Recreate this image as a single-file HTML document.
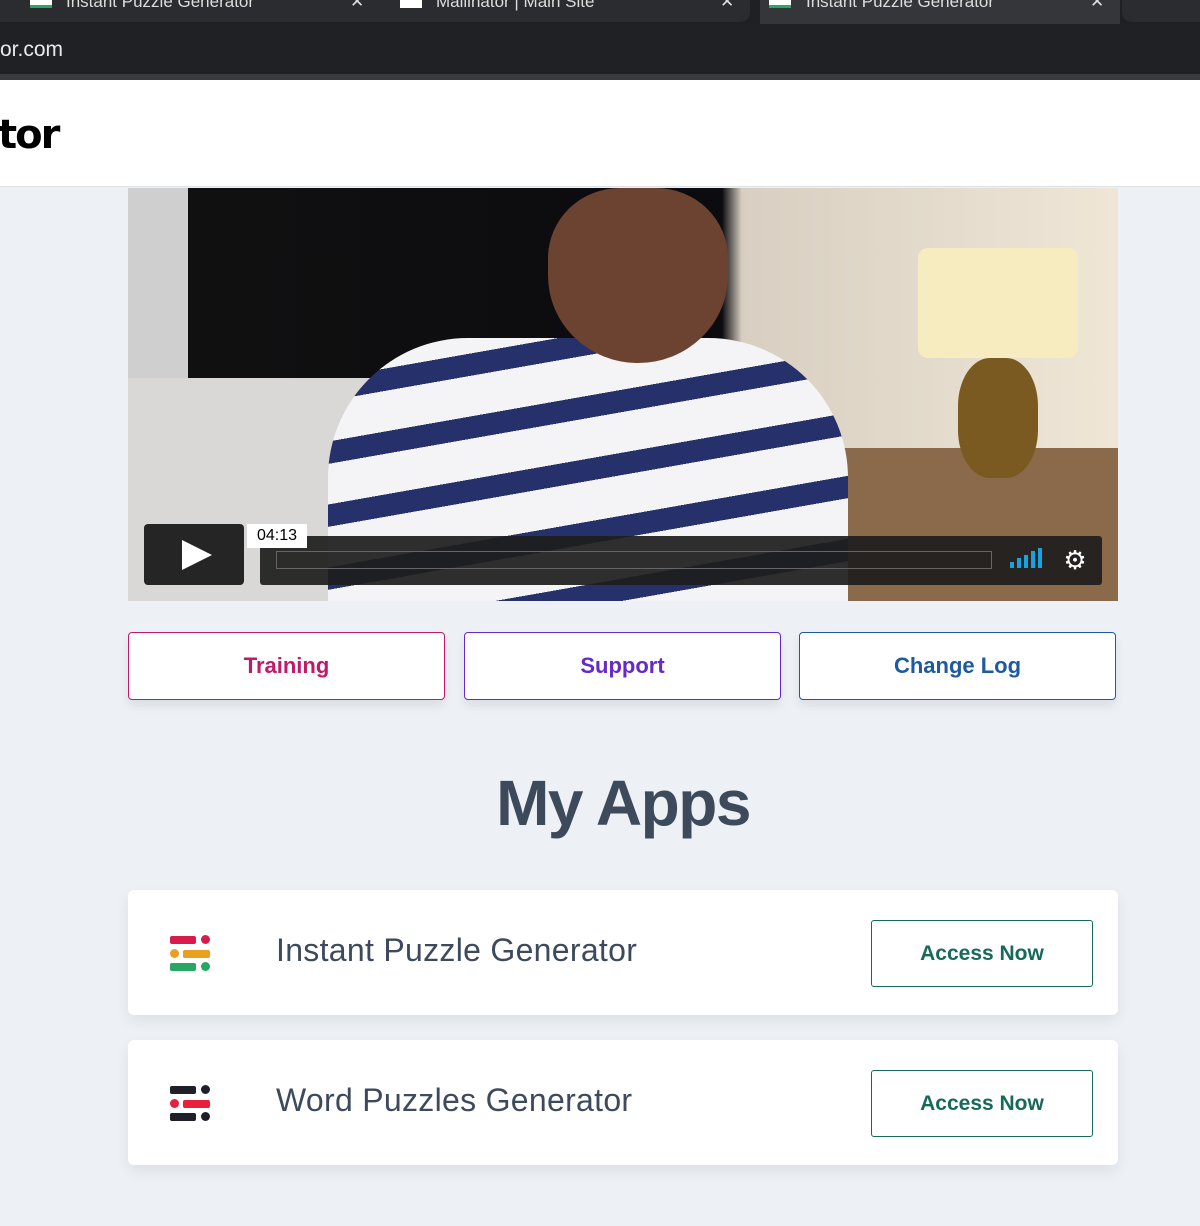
<!DOCTYPE html>
<html><head><meta charset="utf-8"><style>
*{margin:0;padding:0;box-sizing:border-box}
body{width:1200px;height:1226px;background:#edf1f6;font-family:"Liberation Sans",sans-serif;position:relative;overflow:hidden}
.abs{position:absolute}
.btn{position:absolute;top:632px;width:317px;height:68px;background:#fff;border:1.5px solid;border-radius:4px;font-weight:bold;font-size:22px;display:flex;align-items:center;justify-content:center;box-shadow:0 6px 10px rgba(0,0,0,.08)}
.card{position:absolute;left:128px;width:990px;height:125px;background:#fff;border-radius:6px;box-shadow:0 6px 14px rgba(0,0,0,.07)}
.card .t{position:absolute;left:148px;top:42px;font-size:32px;color:#3d4a5c;letter-spacing:.3px}
.card .a{position:absolute;left:743px;top:30px;width:222px;height:67px;border:1.5px solid #17695a;border-radius:3px;color:#17695a;font-weight:bold;font-size:21px;display:flex;align-items:center;justify-content:center}
.ic div{position:absolute;height:8px;border-radius:2px}
.ic .c{width:9px;height:9px;border-radius:50%}
.tab{position:absolute;top:-8px;font-size:17px;color:#ddd}
</style></head><body>
<div class="abs" style="left:0;top:0;width:1200px;height:24px;background:#1f2023"></div>
<div class="abs" style="left:0;top:0;width:750px;height:22px;background:#2b2c30;border-radius:0 0 10px 0"></div>
<div class="abs" style="left:760px;top:0;width:360px;height:24px;background:#35363a"></div>
<div class="abs" style="left:1122px;top:0;width:78px;height:22px;background:#2b2c30;border-radius:0 0 0 10px"></div>
<div class="abs" style="left:30px;top:0;width:22px;height:8px;background:#fff;border-bottom:3px solid #2aa663"></div>
<div class="abs" style="left:400px;top:0;width:22px;height:8px;background:#fff"></div>
<div class="abs" style="left:769px;top:0;width:22px;height:8px;background:#fff;border-bottom:3px solid #2aa663"></div>
<div class="tab" style="left:66px">Instant Puzzle Generator</div>
<div class="tab" style="left:436px">Mailinator | Main Site</div>
<div class="tab" style="left:806px">Instant Puzzle Generator</div>
<div class="tab" style="left:350px">✕</div><div class="tab" style="left:720px">✕</div><div class="tab" style="left:1090px">✕</div>
<div class="abs" style="left:0;top:24px;width:1200px;height:50px;background:#202124"></div>
<div class="abs" style="left:0;top:38px;font-size:21px;color:#e8eaed">or.com</div>
<div class="abs" style="left:0;top:74px;width:1200px;height:6px;background:#3a3b3e"></div>
<div class="abs" style="left:0;top:80px;width:1200px;height:107px;background:#fff;border-bottom:1px solid #dde2e8"></div>
<div class="abs" style="left:-2px;top:112px;font-size:40px;font-weight:900;font-family:'DejaVu Sans','Liberation Sans',sans-serif;color:#000;letter-spacing:-2px">tor</div>
<div class="abs" style="left:128px;top:188px;width:990px;height:413px;overflow:hidden;background:linear-gradient(90deg,#111 0,#0b0b10 60%,#d8cfc2 62%,#efe6d6 100%)">
 <div class="abs" style="left:0;top:0;width:60px;height:200px;background:#cfcfcf"></div>
 <div class="abs" style="left:0;top:190px;width:620px;height:230px;background:#d9d8d6"></div>
 <div class="abs" style="left:620px;top:260px;width:370px;height:160px;background:#8a6a4a"></div>
 <div class="abs" style="left:790px;top:60px;width:160px;height:110px;background:#f7ecc0;border-radius:10px"></div>
 <div class="abs" style="left:830px;top:170px;width:80px;height:120px;background:#7a5a20;border-radius:40%"></div>
 <div class="abs" style="left:200px;top:150px;width:520px;height:300px;background:repeating-linear-gradient(170deg,#f4f4f6 0,#f4f4f6 40px,#26306a 40px,#26306a 62px);border-radius:140px 140px 0 0"></div>
 <div class="abs" style="left:420px;top:0;width:180px;height:175px;background:#6b4330;border-radius:40% 40% 50% 50%"></div>
 <div class="abs" style="left:16px;top:336px;width:100px;height:61px;background:#252525;border-radius:4px"></div>
 <div class="abs" style="left:54px;top:352px;width:0;height:0;border-left:30px solid #fff;border-top:15px solid transparent;border-bottom:15px solid transparent"></div>
 <div class="abs" style="left:132px;top:348px;width:842px;height:49px;background:rgba(30,30,30,.93);border-radius:3px"></div>
 <div class="abs" style="left:148px;top:363px;width:716px;height:18px;border:1px solid #666"></div>
 <div class="abs" style="left:119px;top:336px;width:60px;height:24px;background:#fff;font-size:16px;color:#000;text-align:center;line-height:24px">04:13</div>
 <div class="abs" style="left:882px;top:374px;width:4px;height:6px;background:#1aa2e0"></div>
 <div class="abs" style="left:889px;top:370px;width:4px;height:10px;background:#1aa2e0"></div>
 <div class="abs" style="left:896px;top:367px;width:4px;height:13px;background:#1aa2e0"></div>
 <div class="abs" style="left:903px;top:363px;width:4px;height:17px;background:#1aa2e0"></div>
 <div class="abs" style="left:910px;top:360px;width:4px;height:20px;background:#1aa2e0"></div>
 <div class="abs" style="left:935px;top:360px;width:24px;height:24px;font-size:26px;line-height:24px;color:#fff;text-align:center">⚙</div>
</div>
<div class="btn" style="left:128px;border-color:#c0196a;color:#c0196a">Training</div>
<div class="btn" style="left:464px;border-color:#6628c8;color:#6628c8">Support</div>
<div class="btn" style="left:799px;border-color:#1e5aa0;color:#1e5aa0">Change Log</div>
<div class="abs" style="left:0;top:766px;width:1246px;text-align:center;font-size:64px;font-weight:bold;color:#3d4a5c;letter-spacing:-1.5px">My Apps</div>
<div class="card" style="top:890px">
 <div class="ic">
  <div style="left:42px;top:46px;width:26px;background:#d81b4c"></div><div class="c" style="left:73px;top:45px;background:#d81b4c"></div>
  <div class="c" style="left:42px;top:59px;background:#e8a020"></div><div style="left:55px;top:60px;width:27px;background:#e8a020"></div>
  <div style="left:42px;top:73px;width:26px;background:#2aa663"></div><div class="c" style="left:73px;top:72px;background:#2aa663"></div>
 </div>
 <div class="t">Instant Puzzle Generator</div><div class="a">Access Now</div>
</div>
<div class="card" style="top:1040px">
 <div class="ic">
  <div style="left:42px;top:46px;width:26px;background:#1e1f28"></div><div class="c" style="left:73px;top:45px;background:#1e1f28"></div>
  <div class="c" style="left:42px;top:59px;background:#e8203c"></div><div style="left:55px;top:60px;width:27px;background:#e8203c"></div>
  <div style="left:42px;top:73px;width:26px;background:#1e1f28"></div><div class="c" style="left:73px;top:72px;background:#1e1f28"></div>
 </div>
 <div class="t">Word Puzzles Generator</div><div class="a">Access Now</div>
</div>
</body></html>
